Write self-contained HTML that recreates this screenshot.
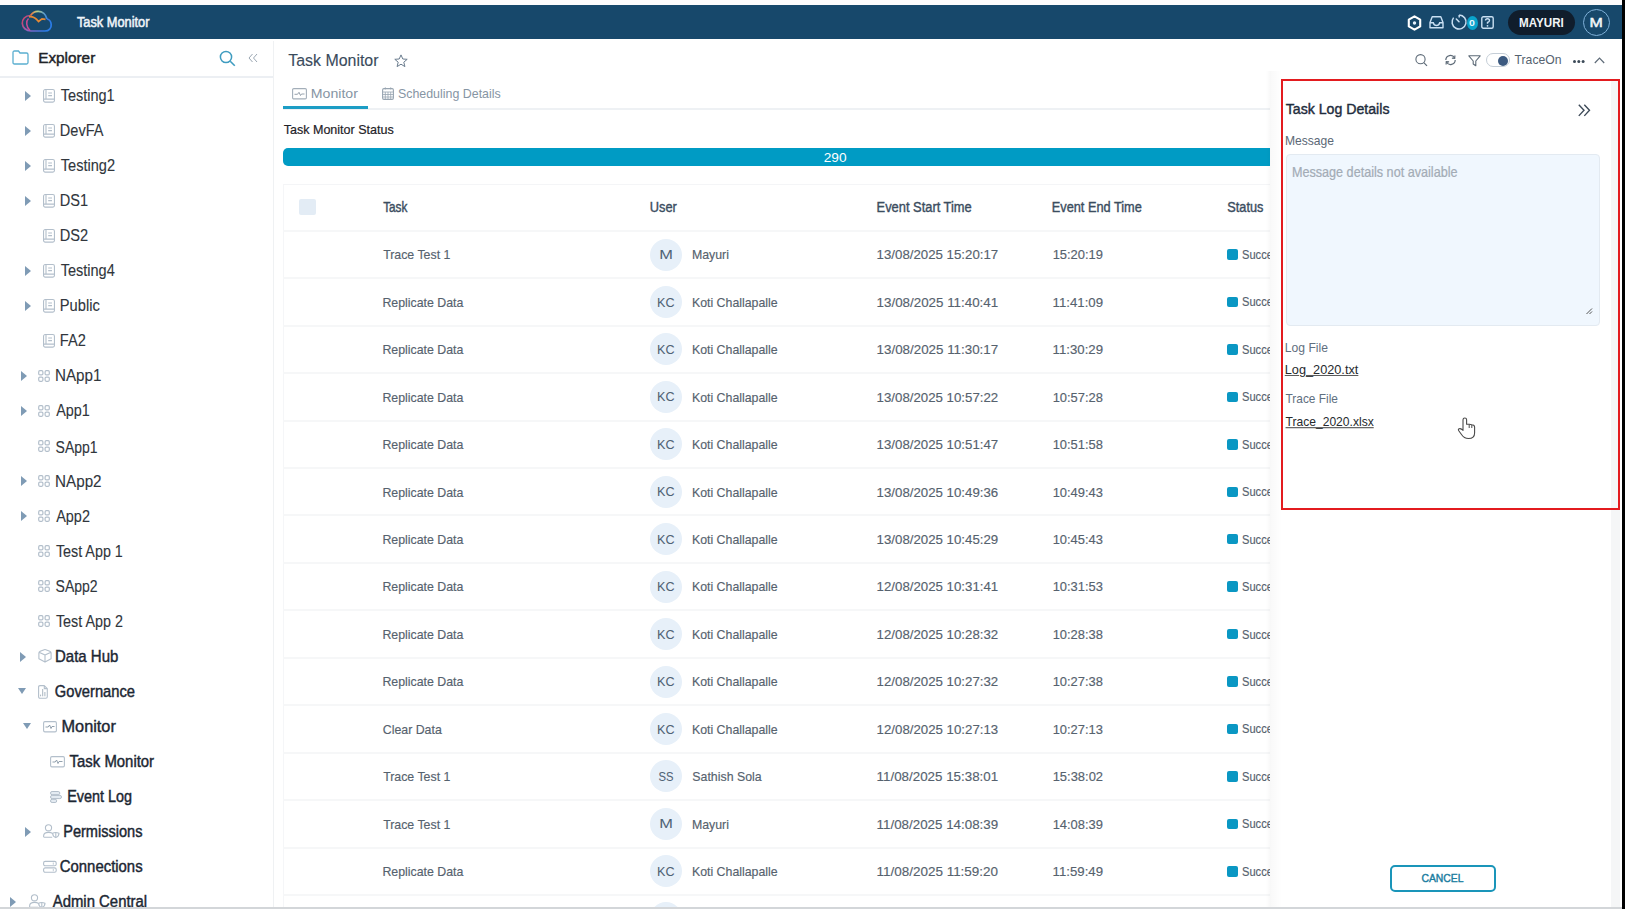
<!DOCTYPE html><html><head><meta charset="utf-8"><style>
*{box-sizing:border-box;margin:0;padding:0}
html,body{width:1625px;height:909px;overflow:hidden;background:#fff;font-family:"Liberation Sans",sans-serif;color:#333}
.abs{position:absolute}
svg{position:absolute;overflow:visible}
.t{position:absolute;white-space:nowrap;line-height:1}
.arr{position:absolute;width:0;height:0;border-top:5px solid transparent;border-bottom:5px solid transparent;border-left:6.5px solid #7f9bb5}
.arrd{position:absolute;width:0;height:0;border-left:4.7px solid transparent;border-right:4.7px solid transparent;border-top:6px solid #7f9bb5}
.av{position:absolute;width:32px;height:32px;border-radius:50%;background:#e7f0f9}
.st{position:absolute;width:10.5px;height:10.5px;background:#0a97c3;border-radius:2px}
.ln{position:absolute;height:2px;background:#f6f7f8}
</style></head><body>
<div class="abs" style="left:0;top:0;width:1625px;height:5px;background:#fdfbfc"></div>
<div class="abs" style="left:0;top:5px;width:1622px;height:34px;background:#17486b"></div>
<svg style="left:20px;top:10px" width="33" height="23" viewBox="0 0 33 23">
<defs><linearGradient id="g1" x1="0" y1="0" x2="1" y2="0.3"><stop offset="0" stop-color="#d9405e"/><stop offset="0.45" stop-color="#8a62c2"/><stop offset="1" stop-color="#2a7be6"/></linearGradient>
<linearGradient id="g2" x1="0" y1="0" x2="1" y2="0"><stop offset="0" stop-color="#e86a3a"/><stop offset="0.4" stop-color="#b7d28a"/><stop offset="1" stop-color="#3a86e0"/></linearGradient></defs>
<path d="M10.5 5.5 C5 5.5 2 9.5 2.3 13.5 C2.6 17.5 6 21 11 21 L25 21 C29 21 31.5 18 31.2 14.5 C31 11.5 29 9.5 27 9" fill="none" stroke="url(#g1)" stroke-width="1.7"/>
<path d="M27 9 C26 4.5 22.5 1.2 18 1.3 C14.5 1.4 12 3 10.5 5.5" fill="none" stroke="url(#g2)" stroke-width="1.7"/>
<path d="M8.5 8.5 C5.8 11 6 17 10 20.5" fill="none" stroke="#c84a95" stroke-width="1.5"/>
<path d="M9 6.8 C13 6.2 16 8.5 18.5 11.5 L22 8.8 L25.5 9.3" fill="none" stroke="#e68a35" stroke-width="1.7"/>
</svg>
<div class="t" style="left:76.94px;top:16.60px;font-size:12.79px;color:#eef3f8;transform:scaleY(1.099);transform-origin:0 10px;-webkit-text-stroke:0.5px #eef3f8;">Task Monitor</div>
<svg style="left:1407px;top:14.5px" width="15" height="16" viewBox="0 0 15 16"><path d="M7.5 1.3 L13.2 4.6 L13.2 11.4 L7.5 14.7 L1.8 11.4 L1.8 4.6 Z" fill="none" stroke="#fff" stroke-width="2.1" stroke-linejoin="round"/><circle cx="7.5" cy="8" r="1.7" fill="#e6f3ff"/></svg>
<svg style="left:1428.5px;top:15.5px" width="15" height="13" viewBox="0 0 15 13"><path d="M3.2 0.8 L11.8 0.8 L14 6.5 L14 11.8 L1 11.8 L1 6.5 Z" fill="none" stroke="#c9dff2" stroke-width="1.4" stroke-linejoin="round"/><path d="M1 6.8 L4.3 6.8 Q5 9.5 7.5 9.5 Q10 9.5 10.7 6.8 L14 6.8" fill="none" stroke="#c9dff2" stroke-width="1.4"/></svg>
<svg style="left:1451px;top:13.5px" width="16" height="16" viewBox="0 0 16 16"><path d="M8.2 1 A7 7 0 1 1 2.6 3.6" fill="none" stroke="#c9dff2" stroke-width="1.5"/><path d="M8.2 0.9 L8.2 3.5" stroke="#c9dff2" stroke-width="1.5"/><path d="M5.3 5 L8 7.8" stroke="#c9dff2" stroke-width="1.5" stroke-linecap="round"/></svg>
<div class="abs" style="left:1466.5px;top:15.8px;width:11px;height:14px;border-radius:50%;background:#0aa3cb"></div>
<div class="t" style="left:1469.08px;top:16.50px;font-size:10.53px;font-weight:bold;color:#e8f8ff;transform:scaleY(0.826);transform-origin:0 9px;">0</div>
<svg style="left:1480.5px;top:15.5px" width="13" height="13" viewBox="0 0 13 13"><rect x="0.8" y="0.8" width="11.4" height="11.4" rx="1.5" fill="none" stroke="#c9dff2" stroke-width="1.4"/><path d="M4.5 4.6 Q4.5 2.7 6.5 2.7 Q8.5 2.7 8.5 4.5 Q8.5 5.8 6.5 6.5 L6.5 7.8" fill="none" stroke="#c9dff2" stroke-width="1.4"/><circle cx="6.5" cy="9.8" r="0.9" fill="#c9dff2"/></svg>
<div class="abs" style="left:1508px;top:10px;width:67px;height:25px;border-radius:12.5px;background:#101d2c"></div>
<div class="t" style="left:1519.05px;top:16.50px;font-size:11.61px;font-weight:bold;color:#f2f5f8;transform:scaleY(1.061);transform-origin:0 10px;">MAYURI</div>
<div class="abs" style="left:1583px;top:9px;width:27px;height:27px;border-radius:50%;border:1.8px solid #7fb0d8"></div>
<div class="t" style="left:1589.52px;top:14.00px;font-size:15.97px;color:#f2f5f8;transform:scaleY(0.817);transform-origin:0 13px;-webkit-text-stroke:0.6px #f2f5f8;">M</div>
<div class="abs" style="left:1622px;top:0;width:3px;height:909px;background:#000"></div>
<div class="abs" style="left:273px;top:41px;width:1px;height:866px;background:#eff1f3"></div>
<div class="abs" style="left:0;top:76px;width:273px;height:1.5px;background:#eceff3"></div>
<svg style="left:12px;top:49.6px" width="17" height="15" viewBox="0 0 17 15"><path d="M1 2.5 Q1 1 2.5 1 L6.5 1 L8 3 L14.5 3 Q16 3 16 4.5 L16 12.5 Q16 14 14.5 14 L2.5 14 Q1 14 1 12.5 Z" fill="none" stroke="#5aaed0" stroke-width="1.3"/></svg>
<div class="t" style="left:38.17px;top:50.00px;font-size:15.34px;color:#1f2328;transform:scaleY(0.935);transform-origin:0 13px;-webkit-text-stroke:0.45px #1f2328;">Explorer</div>
<svg style="left:219px;top:49.5px" width="17" height="17" viewBox="0 0 17 17"><circle cx="7" cy="7" r="5.6" fill="none" stroke="#3f9cc0" stroke-width="1.5"/><path d="M11.2 11.2 L15.8 15.8" stroke="#3f9cc0" stroke-width="1.6"/></svg>
<svg style="left:248px;top:53px" width="10" height="10" viewBox="0 0 10 10"><path d="M4.5 1 L1 5 L4.5 9 M9 1 L5.5 5 L9 9" fill="none" stroke="#9aa6b2" stroke-width="1"/></svg>
<div class="arr" style="left:25px;top:91.00px"></div>
<svg style="left:43px;top:89.2px" width="12" height="14" viewBox="0 0 12 14"><g fill="none" stroke="#b3bfcb" stroke-width="1.1"><rect x="0.55" y="0.55" width="10.9" height="12.6" rx="1.6"/><path d="M3 0.6 L3 10.1 M0.6 10.1 L11.4 10.1 M5.2 4 L9 4 M5.2 6.6 L9 6.6"/></g></svg>
<div class="t" style="left:60.71px;top:89.10px;font-size:14.48px;color:#30363c;transform:scaleY(1.101);transform-origin:0 12px;-webkit-text-stroke:0.1px #30363c;">Testing1</div>
<div class="arr" style="left:25px;top:126.04px"></div>
<svg style="left:43px;top:124.24000000000001px" width="12" height="14" viewBox="0 0 12 14"><g fill="none" stroke="#b3bfcb" stroke-width="1.1"><rect x="0.55" y="0.55" width="10.9" height="12.6" rx="1.6"/><path d="M3 0.6 L3 10.1 M0.6 10.1 L11.4 10.1 M5.2 4 L9 4 M5.2 6.6 L9 6.6"/></g></svg>
<div class="t" style="left:59.84px;top:124.14px;font-size:14.52px;color:#30363c;transform:scaleY(1.098);transform-origin:0 12px;-webkit-text-stroke:0.1px #30363c;">DevFA</div>
<div class="arr" style="left:25px;top:161.08px"></div>
<svg style="left:43px;top:159.28px" width="12" height="14" viewBox="0 0 12 14"><g fill="none" stroke="#b3bfcb" stroke-width="1.1"><rect x="0.55" y="0.55" width="10.9" height="12.6" rx="1.6"/><path d="M3 0.6 L3 10.1 M0.6 10.1 L11.4 10.1 M5.2 4 L9 4 M5.2 6.6 L9 6.6"/></g></svg>
<div class="t" style="left:60.71px;top:159.18px;font-size:14.61px;color:#30363c;transform:scaleY(1.091);transform-origin:0 12px;-webkit-text-stroke:0.1px #30363c;">Testing2</div>
<div class="arr" style="left:25px;top:196.12px"></div>
<svg style="left:43px;top:194.32000000000002px" width="12" height="14" viewBox="0 0 12 14"><g fill="none" stroke="#b3bfcb" stroke-width="1.1"><rect x="0.55" y="0.55" width="10.9" height="12.6" rx="1.6"/><path d="M3 0.6 L3 10.1 M0.6 10.1 L11.4 10.1 M5.2 4 L9 4 M5.2 6.6 L9 6.6"/></g></svg>
<div class="t" style="left:59.84px;top:194.22px;font-size:14.56px;color:#30363c;transform:scaleY(1.095);transform-origin:0 12px;-webkit-text-stroke:0.1px #30363c;">DS1</div>
<svg style="left:43px;top:229.35999999999999px" width="12" height="14" viewBox="0 0 12 14"><g fill="none" stroke="#b3bfcb" stroke-width="1.1"><rect x="0.55" y="0.55" width="10.9" height="12.6" rx="1.6"/><path d="M3 0.6 L3 10.1 M0.6 10.1 L11.4 10.1 M5.2 4 L9 4 M5.2 6.6 L9 6.6"/></g></svg>
<div class="t" style="left:59.83px;top:229.26px;font-size:14.60px;color:#30363c;transform:scaleY(1.092);transform-origin:0 12px;-webkit-text-stroke:0.1px #30363c;">DS2</div>
<div class="arr" style="left:25px;top:266.20px"></div>
<svg style="left:43px;top:264.4px" width="12" height="14" viewBox="0 0 12 14"><g fill="none" stroke="#b3bfcb" stroke-width="1.1"><rect x="0.55" y="0.55" width="10.9" height="12.6" rx="1.6"/><path d="M3 0.6 L3 10.1 M0.6 10.1 L11.4 10.1 M5.2 4 L9 4 M5.2 6.6 L9 6.6"/></g></svg>
<div class="t" style="left:60.71px;top:264.30px;font-size:14.53px;color:#30363c;transform:scaleY(1.097);transform-origin:0 12px;-webkit-text-stroke:0.1px #30363c;">Testing4</div>
<div class="arr" style="left:25px;top:301.24px"></div>
<svg style="left:43px;top:299.44px" width="12" height="14" viewBox="0 0 12 14"><g fill="none" stroke="#b3bfcb" stroke-width="1.1"><rect x="0.55" y="0.55" width="10.9" height="12.6" rx="1.6"/><path d="M3 0.6 L3 10.1 M0.6 10.1 L11.4 10.1 M5.2 4 L9 4 M5.2 6.6 L9 6.6"/></g></svg>
<div class="t" style="left:59.83px;top:299.34px;font-size:14.66px;color:#30363c;transform:scaleY(1.088);transform-origin:0 12px;-webkit-text-stroke:0.1px #30363c;">Public</div>
<svg style="left:43px;top:334.47999999999996px" width="12" height="14" viewBox="0 0 12 14"><g fill="none" stroke="#b3bfcb" stroke-width="1.1"><rect x="0.55" y="0.55" width="10.9" height="12.6" rx="1.6"/><path d="M3 0.6 L3 10.1 M0.6 10.1 L11.4 10.1 M5.2 4 L9 4 M5.2 6.6 L9 6.6"/></g></svg>
<div class="t" style="left:59.83px;top:334.38px;font-size:14.61px;color:#30363c;transform:scaleY(1.091);transform-origin:0 12px;-webkit-text-stroke:0.1px #30363c;">FA2</div>
<div class="arr" style="left:20.5px;top:371.32px"></div>
<svg style="left:37.5px;top:370.12px" width="12" height="12" viewBox="0 0 12 12"><g fill="none" stroke="#b3bfcb" stroke-width="1.2"><rect x="0.7" y="0.7" width="4.2" height="4.2" rx="1.2"/><rect x="7.1" y="0.7" width="4.2" height="4.2" rx="1.2"/><rect x="0.7" y="7.1" width="4.2" height="4.2" rx="1.2"/><rect x="7.1" y="7.1" width="4.2" height="4.2" rx="1.2"/></g></svg>
<div class="t" style="left:54.98px;top:368.42px;font-size:15.22px;color:#30363c;transform:scaleY(1.047);transform-origin:0 13px;-webkit-text-stroke:0.1px #30363c;">NApp1</div>
<div class="arr" style="left:20.5px;top:406.36px"></div>
<svg style="left:37.5px;top:405.16px" width="12" height="12" viewBox="0 0 12 12"><g fill="none" stroke="#b3bfcb" stroke-width="1.2"><rect x="0.7" y="0.7" width="4.2" height="4.2" rx="1.2"/><rect x="7.1" y="0.7" width="4.2" height="4.2" rx="1.2"/><rect x="0.7" y="7.1" width="4.2" height="4.2" rx="1.2"/><rect x="7.1" y="7.1" width="4.2" height="4.2" rx="1.2"/></g></svg>
<div class="t" style="left:56.20px;top:404.46px;font-size:14.41px;color:#30363c;transform:scaleY(1.106);transform-origin:0 12px;-webkit-text-stroke:0.1px #30363c;">App1</div>
<svg style="left:37.5px;top:440.2px" width="12" height="12" viewBox="0 0 12 12"><g fill="none" stroke="#b3bfcb" stroke-width="1.2"><rect x="0.7" y="0.7" width="4.2" height="4.2" rx="1.2"/><rect x="7.1" y="0.7" width="4.2" height="4.2" rx="1.2"/><rect x="0.7" y="7.1" width="4.2" height="4.2" rx="1.2"/><rect x="7.1" y="7.1" width="4.2" height="4.2" rx="1.2"/></g></svg>
<div class="t" style="left:55.57px;top:440.50px;font-size:13.99px;color:#30363c;transform:scaleY(1.140);transform-origin:0 11px;-webkit-text-stroke:0.1px #30363c;">SApp1</div>
<div class="arr" style="left:20.5px;top:476.44px"></div>
<svg style="left:37.5px;top:475.24px" width="12" height="12" viewBox="0 0 12 12"><g fill="none" stroke="#b3bfcb" stroke-width="1.2"><rect x="0.7" y="0.7" width="4.2" height="4.2" rx="1.2"/><rect x="7.1" y="0.7" width="4.2" height="4.2" rx="1.2"/><rect x="0.7" y="7.1" width="4.2" height="4.2" rx="1.2"/><rect x="7.1" y="7.1" width="4.2" height="4.2" rx="1.2"/></g></svg>
<div class="t" style="left:54.98px;top:473.54px;font-size:15.25px;color:#30363c;transform:scaleY(1.046);transform-origin:0 13px;-webkit-text-stroke:0.1px #30363c;">NApp2</div>
<div class="arr" style="left:20.5px;top:511.48px"></div>
<svg style="left:37.5px;top:510.28px" width="12" height="12" viewBox="0 0 12 12"><g fill="none" stroke="#b3bfcb" stroke-width="1.2"><rect x="0.7" y="0.7" width="4.2" height="4.2" rx="1.2"/><rect x="7.1" y="0.7" width="4.2" height="4.2" rx="1.2"/><rect x="0.7" y="7.1" width="4.2" height="4.2" rx="1.2"/><rect x="7.1" y="7.1" width="4.2" height="4.2" rx="1.2"/></g></svg>
<div class="t" style="left:56.20px;top:509.58px;font-size:14.44px;color:#30363c;transform:scaleY(1.104);transform-origin:0 12px;-webkit-text-stroke:0.1px #30363c;">App2</div>
<svg style="left:37.5px;top:545.3199999999999px" width="12" height="12" viewBox="0 0 12 12"><g fill="none" stroke="#b3bfcb" stroke-width="1.2"><rect x="0.7" y="0.7" width="4.2" height="4.2" rx="1.2"/><rect x="7.1" y="0.7" width="4.2" height="4.2" rx="1.2"/><rect x="0.7" y="7.1" width="4.2" height="4.2" rx="1.2"/><rect x="7.1" y="7.1" width="4.2" height="4.2" rx="1.2"/></g></svg>
<div class="t" style="left:55.91px;top:544.62px;font-size:14.33px;color:#30363c;transform:scaleY(1.112);transform-origin:0 12px;-webkit-text-stroke:0.1px #30363c;">Test App 1</div>
<svg style="left:37.5px;top:580.36px" width="12" height="12" viewBox="0 0 12 12"><g fill="none" stroke="#b3bfcb" stroke-width="1.2"><rect x="0.7" y="0.7" width="4.2" height="4.2" rx="1.2"/><rect x="7.1" y="0.7" width="4.2" height="4.2" rx="1.2"/><rect x="0.7" y="7.1" width="4.2" height="4.2" rx="1.2"/><rect x="7.1" y="7.1" width="4.2" height="4.2" rx="1.2"/></g></svg>
<div class="t" style="left:55.57px;top:579.66px;font-size:14.01px;color:#30363c;transform:scaleY(1.138);transform-origin:0 12px;-webkit-text-stroke:0.1px #30363c;">SApp2</div>
<svg style="left:37.5px;top:615.4px" width="12" height="12" viewBox="0 0 12 12"><g fill="none" stroke="#b3bfcb" stroke-width="1.2"><rect x="0.7" y="0.7" width="4.2" height="4.2" rx="1.2"/><rect x="7.1" y="0.7" width="4.2" height="4.2" rx="1.2"/><rect x="0.7" y="7.1" width="4.2" height="4.2" rx="1.2"/><rect x="7.1" y="7.1" width="4.2" height="4.2" rx="1.2"/></g></svg>
<div class="t" style="left:55.91px;top:614.70px;font-size:14.35px;color:#30363c;transform:scaleY(1.111);transform-origin:0 12px;-webkit-text-stroke:0.1px #30363c;">Test App 2</div>
<div class="arr" style="left:20px;top:651.64px"></div>
<svg style="left:38px;top:649.04px" width="14" height="14" viewBox="0 0 14 14"><path d="M0.9 4 Q0.9 3 2.2 2.3 L6.2 0.7 Q7 0.4 7.8 0.7 L11.8 2.3 Q13.1 3 13.1 4 L13.1 9.8 L7 13.1 L0.9 9.8 Z M1 3.2 L7 6 L13 3.2 M7 6 L7 13.1" fill="none" stroke="#b3bfcb" stroke-width="1.1" stroke-linejoin="round"/></svg>
<div class="t" style="left:55.00px;top:648.74px;font-size:15.01px;color:#1c2733;transform:scaleY(1.062);transform-origin:0 13px;-webkit-text-stroke:0.4px #1c2733;">Data Hub</div>
<div class="arrd" style="left:18.2px;top:688.38px"></div>
<svg style="left:38px;top:684.78px" width="10" height="14" viewBox="0 0 10 14"><path d="M2 0.6 L6.3 0.6 L9.3 3.6 L9.3 11.8 Q9.3 13.3 7.8 13.3 L2 13.3 Q0.6 13.3 0.6 11.8 L0.6 2 Q0.6 0.6 2 0.6 Z M6.3 0.6 L6.3 3.6 L9.3 3.6" fill="none" stroke="#b3bfcb" stroke-width="1.1" stroke-linejoin="round"/><path d="M2.6 11.3 L2.6 9.6 M4.7 11.3 L4.7 4 M6.9 11.3 L6.9 7" stroke="#a9b5c1" stroke-width="1"/></svg>
<div class="t" style="left:54.86px;top:684.78px;font-size:14.71px;color:#1c2733;transform:scaleY(1.084);transform-origin:0 12px;-webkit-text-stroke:0.4px #1c2733;">Governance</div>
<div class="arrd" style="left:23.2px;top:723.42px"></div>
<svg style="left:43px;top:720.72px" width="14" height="11.5" viewBox="0 0 14 11.5"><rect x="0.6" y="0.6" width="12.8" height="10.3" rx="1.3" fill="none" stroke="#b3bfcb" stroke-width="1.1"/><path d="M2.5 6 L5.2 6 L6.6 4 L8 7.5 L9 5.5 L11.5 5.5" fill="none" stroke="#8796a5" stroke-width="0.9"/></svg>
<div class="t" style="left:61.49px;top:717.82px;font-size:16.32px;color:#1c2733;transform:scaleY(0.977);transform-origin:0 14px;-webkit-text-stroke:0.4px #1c2733;">Monitor</div>
<svg style="left:49.6px;top:755.76px" width="15" height="11.5" viewBox="0 0 15 11.5"><rect x="0.6" y="0.6" width="13.8" height="10.3" rx="1.3" fill="none" stroke="#b3bfcb" stroke-width="1.1"/><path d="M2.5 6 L5.2 6 L6.6 4 L8 7.5 L9 5.5 L12.5 5.5" fill="none" stroke="#8796a5" stroke-width="0.9"/></svg>
<div class="t" style="left:69.60px;top:754.86px;font-size:14.92px;color:#1c2733;transform:scaleY(1.068);transform-origin:0 12px;-webkit-text-stroke:0.4px #1c2733;">Task Monitor</div>
<svg style="left:49.6px;top:791.10px" width="12" height="12" viewBox="0 0 12 12"><g fill="#e4ebf2" stroke="#b3bfcb" stroke-width="1"><rect x="0.5" y="0.5" width="9.3" height="3.2" rx="1.6"/><rect x="0.5" y="4.4" width="11" height="3.2" rx="1.6"/><rect x="0.5" y="8.3" width="6.2" height="3.2" rx="1.6"/></g></svg>
<div class="t" style="left:67.15px;top:789.90px;font-size:14.40px;color:#1c2733;transform:scaleY(1.107);transform-origin:0 12px;-webkit-text-stroke:0.4px #1c2733;">Event Log</div>
<div class="arr" style="left:25.4px;top:826.84px"></div>
<svg style="left:43px;top:824.14px" width="17" height="14" viewBox="0 0 17 14"><g fill="none" stroke="#b3bfcb" stroke-width="1.1"><circle cx="5.5" cy="3.8" r="3.1"/><path d="M9.3 9.3 Q8.3 8.4 5.5 8.4 Q0.6 8.4 0.6 12 L0.6 12.6 Q0.6 13.2 1.2 13.2 L9.2 13.2"/><path d="M9.6 9.3 Q12.6 7.8 16 9.3 Q16 12.3 12.8 13.6 Q9.6 12.3 9.6 9.3 Z"/><path d="M12.8 9 L12.8 13.2"/></g></svg>
<div class="t" style="left:63.24px;top:824.94px;font-size:14.56px;color:#1c2733;transform:scaleY(1.095);transform-origin:0 12px;-webkit-text-stroke:0.4px #1c2733;">Permissions</div>
<svg style="left:42.8px;top:861.18px" width="14" height="12" viewBox="0 0 14 12"><g fill="none" stroke="#b3bfcb" stroke-width="1.1"><rect x="0.6" y="0.4" width="12.6" height="4.4" rx="1.6"/><rect x="0.6" y="6.9" width="12.6" height="4.4" rx="1.6"/></g><path d="M10.3 1.5 L10.3 3.7 M10.3 8 L10.3 10.2" stroke="#b3bfcb" stroke-width="0.8"/></svg>
<div class="t" style="left:59.75px;top:859.98px;font-size:14.92px;color:#1c2733;transform:scaleY(1.068);transform-origin:0 12px;-webkit-text-stroke:0.4px #1c2733;">Connections</div>
<div class="arr" style="left:10.3px;top:896.92px"></div>
<svg style="left:28.5px;top:894.2199999999999px" width="17" height="14" viewBox="0 0 17 14"><g fill="none" stroke="#b3bfcb" stroke-width="1.1"><circle cx="5.5" cy="3.8" r="3.1"/><path d="M9.3 9.3 Q8.3 8.4 5.5 8.4 Q0.6 8.4 0.6 12 L0.6 12.6 Q0.6 13.2 1.2 13.2 L9.2 13.2"/><path d="M9.6 9.3 Q12.6 7.8 16 9.3 Q16 12.3 12.8 13.6 Q9.6 12.3 9.6 9.3 Z"/><path d="M12.8 9 L12.8 13.2"/></g></svg>
<div class="t" style="left:52.70px;top:895.02px;font-size:14.91px;color:#1c2733;transform:scaleY(1.069);transform-origin:0 12px;-webkit-text-stroke:0.4px #1c2733;">Admin Central</div>
<div class="t" style="left:288.28px;top:52.70px;font-size:15.93px;color:#3a4b5c;transform:scaleY(0.982);transform-origin:0 13px;-webkit-text-stroke:0.12px #3a4b5c;">Task Monitor</div>
<svg style="left:394px;top:53.5px" width="14" height="14" viewBox="0 0 14 14"><path d="M7 0.9 L8.8 5 L13.2 5.3 L9.8 8.2 L10.9 12.6 L7 10.2 L3.1 12.6 L4.2 8.2 L0.8 5.3 L5.2 5 Z" fill="none" stroke="#6a7c8e" stroke-width="1" stroke-linejoin="round"/></svg>
<svg style="left:291.6px;top:88px" width="15" height="11.5" viewBox="0 0 15 11.5"><rect x="0.6" y="0.6" width="13.8" height="10.3" rx="1.2" fill="none" stroke="#a3aeb9" stroke-width="1.1"/><path d="M2.5 6.3 L5.5 6.3 L7 4.3 L8.5 7.5 L9.5 6 L12.5 6" fill="none" stroke="#8d99a5" stroke-width="0.9"/></svg>
<div class="t" style="left:310.77px;top:86.40px;font-size:14.13px;color:#8695a4;transform:scaleY(0.964);transform-origin:0 12px;">Monitor</div>
<svg style="left:382.2px;top:87.2px" width="12" height="13" viewBox="0 0 12 13"><rect x="0.6" y="1.6" width="10.8" height="10.8" rx="1.3" fill="none" stroke="#98a5b1" stroke-width="1.1"/><path d="M0.6 5 L11.4 5 M0.6 7.5 L11.4 7.5 M0.6 10 L11.4 10 M3.3 5 L3.3 12.4 M6 5 L6 12.4 M8.7 5 L8.7 12.4 M3.3 0.3 L3.3 2.5 M8.7 0.3 L8.7 2.5" stroke="#98a5b1" stroke-width="0.8"/></svg>
<div class="t" style="left:397.94px;top:88.40px;font-size:12.41px;color:#8695a4;transform:scaleY(1.098);transform-origin:0 10px;">Scheduling Details</div>
<div class="abs" style="left:283px;top:108px;width:987px;height:1.5px;background:#eef1f4"></div>
<div class="abs" style="left:283px;top:105.8px;width:84.5px;height:2.8px;background:#1c9dc5"></div>
<div class="t" style="left:283.65px;top:123.50px;font-size:12.55px;color:#1f2328;transform:scaleY(1.039);transform-origin:0 10px;-webkit-text-stroke:0.2px #1f2328;">Task Monitor Status</div>
<div class="abs" style="left:283px;top:148px;width:988px;height:18px;background:#009bc4;border-radius:5px 0 0 5px"></div>
<div class="t" style="left:823.72px;top:151.00px;font-size:13.67px;color:#ffffff;transform:scaleY(0.944);transform-origin:0 11px;">290</div>
<div class="abs" style="left:283px;top:183.5px;width:987px;height:724px;background:#fff;border-top:1px solid #f4f5f7;border-left:1px solid #f5f6f8"></div>
<div class="abs" style="left:298.5px;top:199px;width:17px;height:16px;border-radius:2px;background:#e3ecf5"></div>
<div class="t" style="left:383.16px;top:202.00px;font-size:11.79px;color:#3b4d60;transform:scaleY(1.180);transform-origin:0 10px;-webkit-text-stroke:0.35px #3b4d60;">Task</div>
<div class="t" style="left:649.74px;top:202.00px;font-size:12.82px;color:#3b4d60;transform:scaleY(1.085);transform-origin:0 10px;-webkit-text-stroke:0.35px #3b4d60;">User</div>
<div class="t" style="left:876.57px;top:202.00px;font-size:12.88px;color:#3b4d60;transform:scaleY(1.080);transform-origin:0 10px;-webkit-text-stroke:0.35px #3b4d60;">Event Start Time</div>
<div class="t" style="left:1051.78px;top:202.00px;font-size:12.76px;color:#3b4d60;transform:scaleY(1.090);transform-origin:0 10px;-webkit-text-stroke:0.35px #3b4d60;">Event End Time</div>
<div class="t" style="left:1227.33px;top:202.00px;font-size:12.74px;color:#3b4d60;transform:scaleY(1.092);transform-origin:0 10px;-webkit-text-stroke:0.35px #3b4d60;">Status</div>
<div class="ln" style="left:283px;top:229.8px;width:987px"></div>
<div class="t" style="left:383.15px;top:249.30px;font-size:12.35px;color:#56626e;transform:scaleY(1.103);transform-origin:0 10px;-webkit-text-stroke:0.15px #56626e;">Trace Test 1</div>
<div class="av" style="left:650px;top:238.5px"></div>
<div class="t" style="left:659.19px;top:245.10px;font-size:16.42px;color:#4f6275;transform:scaleY(0.786);transform-origin:0 14px;-webkit-text-stroke:0.05px #4f6275;">M</div>
<div class="t" style="left:691.91px;top:249.30px;font-size:12.35px;color:#56626e;transform:scaleY(1.103);transform-origin:0 10px;-webkit-text-stroke:0.15px #56626e;">Mayuri</div>
<div class="t" style="left:876.61px;top:248.30px;font-size:13.26px;color:#56626e;transform:scaleY(1.027);transform-origin:0 11px;-webkit-text-stroke:0.15px #56626e;">13/08/2025 15:20:17</div>
<div class="t" style="left:1052.63px;top:249.30px;font-size:12.94px;color:#56626e;transform:scaleY(1.052);transform-origin:0 10px;-webkit-text-stroke:0.15px #56626e;">15:20:19</div>
<div class="st" style="left:1227.3px;top:249.3px"></div>
<div class="abs" style="left:1240px;top:242.5px;width:30.5px;height:22px;overflow:hidden"><div class="t" style="left:2.24px;top:6.60px;font-size:12.35px;color:#56626e;transform:scale(0.900,1.080);transform-origin:0 10px;-webkit-text-stroke:0.15px #56626e;">Success</div></div>
<div class="ln" style="left:283px;top:277.2px;width:987px"></div>
<div class="t" style="left:382.41px;top:296.74px;font-size:12.35px;color:#56626e;transform:scaleY(1.103);transform-origin:0 10px;-webkit-text-stroke:0.15px #56626e;">Replicate Data</div>
<div class="av" style="left:650px;top:285.9px"></div>
<div class="t" style="left:656.99px;top:296.54px;font-size:12.60px;color:#4f6275;transform:scaleY(1.024);transform-origin:0 10px;-webkit-text-stroke:0.05px #4f6275;">KC</div>
<div class="t" style="left:691.91px;top:296.74px;font-size:12.35px;color:#56626e;transform:scaleY(1.103);transform-origin:0 10px;-webkit-text-stroke:0.15px #56626e;">Koti Challapalle</div>
<div class="t" style="left:876.60px;top:295.74px;font-size:13.36px;color:#56626e;transform:scaleY(1.019);transform-origin:0 11px;-webkit-text-stroke:0.15px #56626e;">13/08/2025 11:40:41</div>
<div class="t" style="left:1052.61px;top:295.74px;font-size:13.21px;color:#56626e;transform:scaleY(1.032);transform-origin:0 11px;-webkit-text-stroke:0.15px #56626e;">11:41:09</div>
<div class="st" style="left:1227.3px;top:296.7px"></div>
<div class="abs" style="left:1240px;top:289.9px;width:30.5px;height:22px;overflow:hidden"><div class="t" style="left:2.24px;top:6.60px;font-size:12.35px;color:#56626e;transform:scale(0.900,1.080);transform-origin:0 10px;-webkit-text-stroke:0.15px #56626e;">Success</div></div>
<div class="ln" style="left:283px;top:324.7px;width:987px"></div>
<div class="t" style="left:382.41px;top:344.18px;font-size:12.35px;color:#56626e;transform:scaleY(1.103);transform-origin:0 10px;-webkit-text-stroke:0.15px #56626e;">Replicate Data</div>
<div class="av" style="left:650px;top:333.4px"></div>
<div class="t" style="left:656.99px;top:343.98px;font-size:12.60px;color:#4f6275;transform:scaleY(1.024);transform-origin:0 10px;-webkit-text-stroke:0.05px #4f6275;">KC</div>
<div class="t" style="left:691.91px;top:344.18px;font-size:12.35px;color:#56626e;transform:scaleY(1.103);transform-origin:0 10px;-webkit-text-stroke:0.15px #56626e;">Koti Challapalle</div>
<div class="t" style="left:876.60px;top:343.18px;font-size:13.37px;color:#56626e;transform:scaleY(1.019);transform-origin:0 11px;-webkit-text-stroke:0.15px #56626e;">13/08/2025 11:30:17</div>
<div class="t" style="left:1052.61px;top:343.18px;font-size:13.21px;color:#56626e;transform:scaleY(1.032);transform-origin:0 11px;-webkit-text-stroke:0.15px #56626e;">11:30:29</div>
<div class="st" style="left:1227.3px;top:344.2px"></div>
<div class="abs" style="left:1240px;top:337.4px;width:30.5px;height:22px;overflow:hidden"><div class="t" style="left:2.24px;top:6.60px;font-size:12.35px;color:#56626e;transform:scale(0.900,1.080);transform-origin:0 10px;-webkit-text-stroke:0.15px #56626e;">Success</div></div>
<div class="ln" style="left:283px;top:372.1px;width:987px"></div>
<div class="t" style="left:382.41px;top:391.62px;font-size:12.35px;color:#56626e;transform:scaleY(1.103);transform-origin:0 10px;-webkit-text-stroke:0.15px #56626e;">Replicate Data</div>
<div class="av" style="left:650px;top:380.8px"></div>
<div class="t" style="left:656.99px;top:391.42px;font-size:12.60px;color:#4f6275;transform:scaleY(1.024);transform-origin:0 10px;-webkit-text-stroke:0.05px #4f6275;">KC</div>
<div class="t" style="left:691.91px;top:391.62px;font-size:12.35px;color:#56626e;transform:scaleY(1.103);transform-origin:0 10px;-webkit-text-stroke:0.15px #56626e;">Koti Challapalle</div>
<div class="t" style="left:876.61px;top:390.62px;font-size:13.26px;color:#56626e;transform:scaleY(1.027);transform-origin:0 11px;-webkit-text-stroke:0.15px #56626e;">13/08/2025 10:57:22</div>
<div class="t" style="left:1052.63px;top:391.62px;font-size:12.93px;color:#56626e;transform:scaleY(1.054);transform-origin:0 10px;-webkit-text-stroke:0.15px #56626e;">10:57:28</div>
<div class="st" style="left:1227.3px;top:391.6px"></div>
<div class="abs" style="left:1240px;top:384.8px;width:30.5px;height:22px;overflow:hidden"><div class="t" style="left:2.24px;top:6.60px;font-size:12.35px;color:#56626e;transform:scale(0.900,1.080);transform-origin:0 10px;-webkit-text-stroke:0.15px #56626e;">Success</div></div>
<div class="ln" style="left:283px;top:419.6px;width:987px"></div>
<div class="t" style="left:382.41px;top:439.06px;font-size:12.35px;color:#56626e;transform:scaleY(1.103);transform-origin:0 10px;-webkit-text-stroke:0.15px #56626e;">Replicate Data</div>
<div class="av" style="left:650px;top:428.3px"></div>
<div class="t" style="left:656.99px;top:438.86px;font-size:12.60px;color:#4f6275;transform:scaleY(1.024);transform-origin:0 10px;-webkit-text-stroke:0.05px #4f6275;">KC</div>
<div class="t" style="left:691.91px;top:439.06px;font-size:12.35px;color:#56626e;transform:scaleY(1.103);transform-origin:0 10px;-webkit-text-stroke:0.15px #56626e;">Koti Challapalle</div>
<div class="t" style="left:876.61px;top:438.06px;font-size:13.26px;color:#56626e;transform:scaleY(1.027);transform-origin:0 11px;-webkit-text-stroke:0.15px #56626e;">13/08/2025 10:51:47</div>
<div class="t" style="left:1052.63px;top:439.06px;font-size:12.93px;color:#56626e;transform:scaleY(1.054);transform-origin:0 10px;-webkit-text-stroke:0.15px #56626e;">10:51:58</div>
<div class="st" style="left:1227.3px;top:439.1px"></div>
<div class="abs" style="left:1240px;top:432.3px;width:30.5px;height:22px;overflow:hidden"><div class="t" style="left:2.24px;top:6.60px;font-size:12.35px;color:#56626e;transform:scale(0.900,1.080);transform-origin:0 10px;-webkit-text-stroke:0.15px #56626e;">Success</div></div>
<div class="ln" style="left:283px;top:467.0px;width:987px"></div>
<div class="t" style="left:382.41px;top:486.50px;font-size:12.35px;color:#56626e;transform:scaleY(1.103);transform-origin:0 10px;-webkit-text-stroke:0.15px #56626e;">Replicate Data</div>
<div class="av" style="left:650px;top:475.7px"></div>
<div class="t" style="left:656.99px;top:486.30px;font-size:12.60px;color:#4f6275;transform:scaleY(1.024);transform-origin:0 10px;-webkit-text-stroke:0.05px #4f6275;">KC</div>
<div class="t" style="left:691.91px;top:486.50px;font-size:12.35px;color:#56626e;transform:scaleY(1.103);transform-origin:0 10px;-webkit-text-stroke:0.15px #56626e;">Koti Challapalle</div>
<div class="t" style="left:876.61px;top:485.50px;font-size:13.25px;color:#56626e;transform:scaleY(1.029);transform-origin:0 11px;-webkit-text-stroke:0.15px #56626e;">13/08/2025 10:49:36</div>
<div class="t" style="left:1052.63px;top:486.50px;font-size:12.93px;color:#56626e;transform:scaleY(1.054);transform-origin:0 10px;-webkit-text-stroke:0.15px #56626e;">10:49:43</div>
<div class="st" style="left:1227.3px;top:486.5px"></div>
<div class="abs" style="left:1240px;top:479.7px;width:30.5px;height:22px;overflow:hidden"><div class="t" style="left:2.24px;top:6.60px;font-size:12.35px;color:#56626e;transform:scale(0.900,1.080);transform-origin:0 10px;-webkit-text-stroke:0.15px #56626e;">Success</div></div>
<div class="ln" style="left:283px;top:514.4px;width:987px"></div>
<div class="t" style="left:382.41px;top:533.94px;font-size:12.35px;color:#56626e;transform:scaleY(1.103);transform-origin:0 10px;-webkit-text-stroke:0.15px #56626e;">Replicate Data</div>
<div class="av" style="left:650px;top:523.1px"></div>
<div class="t" style="left:656.99px;top:533.74px;font-size:12.60px;color:#4f6275;transform:scaleY(1.024);transform-origin:0 10px;-webkit-text-stroke:0.05px #4f6275;">KC</div>
<div class="t" style="left:691.91px;top:533.94px;font-size:12.35px;color:#56626e;transform:scaleY(1.103);transform-origin:0 10px;-webkit-text-stroke:0.15px #56626e;">Koti Challapalle</div>
<div class="t" style="left:876.61px;top:532.94px;font-size:13.25px;color:#56626e;transform:scaleY(1.028);transform-origin:0 11px;-webkit-text-stroke:0.15px #56626e;">13/08/2025 10:45:29</div>
<div class="t" style="left:1052.63px;top:533.94px;font-size:12.93px;color:#56626e;transform:scaleY(1.054);transform-origin:0 10px;-webkit-text-stroke:0.15px #56626e;">10:45:43</div>
<div class="st" style="left:1227.3px;top:533.9px"></div>
<div class="abs" style="left:1240px;top:527.1px;width:30.5px;height:22px;overflow:hidden"><div class="t" style="left:2.24px;top:6.60px;font-size:12.35px;color:#56626e;transform:scale(0.900,1.080);transform-origin:0 10px;-webkit-text-stroke:0.15px #56626e;">Success</div></div>
<div class="ln" style="left:283px;top:561.9px;width:987px"></div>
<div class="t" style="left:382.41px;top:581.38px;font-size:12.35px;color:#56626e;transform:scaleY(1.103);transform-origin:0 10px;-webkit-text-stroke:0.15px #56626e;">Replicate Data</div>
<div class="av" style="left:650px;top:570.6px"></div>
<div class="t" style="left:656.99px;top:581.18px;font-size:12.60px;color:#4f6275;transform:scaleY(1.024);transform-origin:0 10px;-webkit-text-stroke:0.05px #4f6275;">KC</div>
<div class="t" style="left:691.91px;top:581.38px;font-size:12.35px;color:#56626e;transform:scaleY(1.103);transform-origin:0 10px;-webkit-text-stroke:0.15px #56626e;">Koti Challapalle</div>
<div class="t" style="left:876.61px;top:580.38px;font-size:13.25px;color:#56626e;transform:scaleY(1.028);transform-origin:0 11px;-webkit-text-stroke:0.15px #56626e;">12/08/2025 10:31:41</div>
<div class="t" style="left:1052.63px;top:581.38px;font-size:12.93px;color:#56626e;transform:scaleY(1.054);transform-origin:0 10px;-webkit-text-stroke:0.15px #56626e;">10:31:53</div>
<div class="st" style="left:1227.3px;top:581.4px"></div>
<div class="abs" style="left:1240px;top:574.6px;width:30.5px;height:22px;overflow:hidden"><div class="t" style="left:2.24px;top:6.60px;font-size:12.35px;color:#56626e;transform:scale(0.900,1.080);transform-origin:0 10px;-webkit-text-stroke:0.15px #56626e;">Success</div></div>
<div class="ln" style="left:283px;top:609.3px;width:987px"></div>
<div class="t" style="left:382.41px;top:628.82px;font-size:12.35px;color:#56626e;transform:scaleY(1.103);transform-origin:0 10px;-webkit-text-stroke:0.15px #56626e;">Replicate Data</div>
<div class="av" style="left:650px;top:618.0px"></div>
<div class="t" style="left:656.99px;top:628.62px;font-size:12.60px;color:#4f6275;transform:scaleY(1.024);transform-origin:0 10px;-webkit-text-stroke:0.05px #4f6275;">KC</div>
<div class="t" style="left:691.91px;top:628.82px;font-size:12.35px;color:#56626e;transform:scaleY(1.103);transform-origin:0 10px;-webkit-text-stroke:0.15px #56626e;">Koti Challapalle</div>
<div class="t" style="left:876.61px;top:627.82px;font-size:13.26px;color:#56626e;transform:scaleY(1.027);transform-origin:0 11px;-webkit-text-stroke:0.15px #56626e;">12/08/2025 10:28:32</div>
<div class="t" style="left:1052.63px;top:628.82px;font-size:12.93px;color:#56626e;transform:scaleY(1.054);transform-origin:0 10px;-webkit-text-stroke:0.15px #56626e;">10:28:38</div>
<div class="st" style="left:1227.3px;top:628.8px"></div>
<div class="abs" style="left:1240px;top:622.0px;width:30.5px;height:22px;overflow:hidden"><div class="t" style="left:2.24px;top:6.60px;font-size:12.35px;color:#56626e;transform:scale(0.900,1.080);transform-origin:0 10px;-webkit-text-stroke:0.15px #56626e;">Success</div></div>
<div class="ln" style="left:283px;top:656.8px;width:987px"></div>
<div class="t" style="left:382.41px;top:676.26px;font-size:12.35px;color:#56626e;transform:scaleY(1.103);transform-origin:0 10px;-webkit-text-stroke:0.15px #56626e;">Replicate Data</div>
<div class="av" style="left:650px;top:665.5px"></div>
<div class="t" style="left:656.99px;top:676.06px;font-size:12.60px;color:#4f6275;transform:scaleY(1.024);transform-origin:0 10px;-webkit-text-stroke:0.05px #4f6275;">KC</div>
<div class="t" style="left:691.91px;top:676.26px;font-size:12.35px;color:#56626e;transform:scaleY(1.103);transform-origin:0 10px;-webkit-text-stroke:0.15px #56626e;">Koti Challapalle</div>
<div class="t" style="left:876.61px;top:675.26px;font-size:13.26px;color:#56626e;transform:scaleY(1.027);transform-origin:0 11px;-webkit-text-stroke:0.15px #56626e;">12/08/2025 10:27:32</div>
<div class="t" style="left:1052.63px;top:676.26px;font-size:12.93px;color:#56626e;transform:scaleY(1.054);transform-origin:0 10px;-webkit-text-stroke:0.15px #56626e;">10:27:38</div>
<div class="st" style="left:1227.3px;top:676.3px"></div>
<div class="abs" style="left:1240px;top:669.5px;width:30.5px;height:22px;overflow:hidden"><div class="t" style="left:2.24px;top:6.60px;font-size:12.35px;color:#56626e;transform:scale(0.900,1.080);transform-origin:0 10px;-webkit-text-stroke:0.15px #56626e;">Success</div></div>
<div class="ln" style="left:283px;top:704.2px;width:987px"></div>
<div class="t" style="left:382.78px;top:723.70px;font-size:12.35px;color:#56626e;transform:scaleY(1.103);transform-origin:0 10px;-webkit-text-stroke:0.15px #56626e;">Clear Data</div>
<div class="av" style="left:650px;top:712.9px"></div>
<div class="t" style="left:656.99px;top:723.50px;font-size:12.60px;color:#4f6275;transform:scaleY(1.024);transform-origin:0 10px;-webkit-text-stroke:0.05px #4f6275;">KC</div>
<div class="t" style="left:691.91px;top:723.70px;font-size:12.35px;color:#56626e;transform:scaleY(1.103);transform-origin:0 10px;-webkit-text-stroke:0.15px #56626e;">Koti Challapalle</div>
<div class="t" style="left:876.61px;top:722.70px;font-size:13.25px;color:#56626e;transform:scaleY(1.029);transform-origin:0 11px;-webkit-text-stroke:0.15px #56626e;">12/08/2025 10:27:13</div>
<div class="t" style="left:1052.63px;top:723.70px;font-size:12.93px;color:#56626e;transform:scaleY(1.054);transform-origin:0 10px;-webkit-text-stroke:0.15px #56626e;">10:27:13</div>
<div class="st" style="left:1227.3px;top:723.7px"></div>
<div class="abs" style="left:1240px;top:716.9px;width:30.5px;height:22px;overflow:hidden"><div class="t" style="left:2.24px;top:6.60px;font-size:12.35px;color:#56626e;transform:scale(0.900,1.080);transform-origin:0 10px;-webkit-text-stroke:0.15px #56626e;">Success</div></div>
<div class="ln" style="left:283px;top:751.6px;width:987px"></div>
<div class="t" style="left:383.15px;top:771.14px;font-size:12.35px;color:#56626e;transform:scaleY(1.103);transform-origin:0 10px;-webkit-text-stroke:0.15px #56626e;">Trace Test 1</div>
<div class="av" style="left:650px;top:760.3px"></div>
<div class="t" style="left:658.49px;top:771.94px;font-size:11.29px;color:#4f6275;transform:scaleY(1.142);transform-origin:0 9px;-webkit-text-stroke:0.05px #4f6275;">SS</div>
<div class="t" style="left:692.34px;top:771.14px;font-size:12.35px;color:#56626e;transform:scaleY(1.103);transform-origin:0 10px;-webkit-text-stroke:0.15px #56626e;">Sathish Sola</div>
<div class="t" style="left:876.60px;top:770.14px;font-size:13.36px;color:#56626e;transform:scaleY(1.019);transform-origin:0 11px;-webkit-text-stroke:0.15px #56626e;">11/08/2025 15:38:01</div>
<div class="t" style="left:1052.63px;top:771.14px;font-size:12.96px;color:#56626e;transform:scaleY(1.051);transform-origin:0 10px;-webkit-text-stroke:0.15px #56626e;">15:38:02</div>
<div class="st" style="left:1227.3px;top:771.1px"></div>
<div class="abs" style="left:1240px;top:764.3px;width:30.5px;height:22px;overflow:hidden"><div class="t" style="left:2.24px;top:6.60px;font-size:12.35px;color:#56626e;transform:scale(0.900,1.080);transform-origin:0 10px;-webkit-text-stroke:0.15px #56626e;">Success</div></div>
<div class="ln" style="left:283px;top:799.1px;width:987px"></div>
<div class="t" style="left:383.15px;top:818.58px;font-size:12.35px;color:#56626e;transform:scaleY(1.103);transform-origin:0 10px;-webkit-text-stroke:0.15px #56626e;">Trace Test 1</div>
<div class="av" style="left:650px;top:807.8px"></div>
<div class="t" style="left:659.19px;top:814.38px;font-size:16.42px;color:#4f6275;transform:scaleY(0.786);transform-origin:0 14px;-webkit-text-stroke:0.05px #4f6275;">M</div>
<div class="t" style="left:691.91px;top:818.58px;font-size:12.35px;color:#56626e;transform:scaleY(1.103);transform-origin:0 10px;-webkit-text-stroke:0.15px #56626e;">Mayuri</div>
<div class="t" style="left:876.60px;top:817.58px;font-size:13.36px;color:#56626e;transform:scaleY(1.019);transform-origin:0 11px;-webkit-text-stroke:0.15px #56626e;">11/08/2025 14:08:39</div>
<div class="t" style="left:1052.63px;top:818.58px;font-size:12.94px;color:#56626e;transform:scaleY(1.052);transform-origin:0 10px;-webkit-text-stroke:0.15px #56626e;">14:08:39</div>
<div class="st" style="left:1227.3px;top:818.6px"></div>
<div class="abs" style="left:1240px;top:811.8px;width:30.5px;height:22px;overflow:hidden"><div class="t" style="left:2.24px;top:6.60px;font-size:12.35px;color:#56626e;transform:scale(0.900,1.080);transform-origin:0 10px;-webkit-text-stroke:0.15px #56626e;">Success</div></div>
<div class="ln" style="left:283px;top:846.5px;width:987px"></div>
<div class="t" style="left:382.41px;top:866.02px;font-size:12.35px;color:#56626e;transform:scaleY(1.103);transform-origin:0 10px;-webkit-text-stroke:0.15px #56626e;">Replicate Data</div>
<div class="av" style="left:650px;top:855.2px"></div>
<div class="t" style="left:656.99px;top:865.82px;font-size:12.60px;color:#4f6275;transform:scaleY(1.024);transform-origin:0 10px;-webkit-text-stroke:0.05px #4f6275;">KC</div>
<div class="t" style="left:691.91px;top:866.02px;font-size:12.35px;color:#56626e;transform:scaleY(1.103);transform-origin:0 10px;-webkit-text-stroke:0.15px #56626e;">Koti Challapalle</div>
<div class="t" style="left:876.59px;top:865.02px;font-size:13.46px;color:#56626e;transform:scaleY(1.012);transform-origin:0 11px;-webkit-text-stroke:0.15px #56626e;">11/08/2025 11:59:20</div>
<div class="t" style="left:1052.61px;top:865.02px;font-size:13.21px;color:#56626e;transform:scaleY(1.032);transform-origin:0 11px;-webkit-text-stroke:0.15px #56626e;">11:59:49</div>
<div class="st" style="left:1227.3px;top:866.0px"></div>
<div class="abs" style="left:1240px;top:859.2px;width:30.5px;height:22px;overflow:hidden"><div class="t" style="left:2.24px;top:6.60px;font-size:12.35px;color:#56626e;transform:scale(0.900,1.080);transform-origin:0 10px;-webkit-text-stroke:0.15px #56626e;">Success</div></div>
<div class="ln" style="left:283px;top:894.0px;width:987px"></div>
<div class="av" style="left:650px;top:901.9px"></div>
<div class="abs" style="left:0;top:907px;width:1622px;height:2px;background:#d3d6d9"></div>
<svg style="left:1414.5px;top:53.5px" width="14" height="12" viewBox="0 0 14 12"><circle cx="5.5" cy="5.2" r="4.6" fill="none" stroke="#5e6b78" stroke-width="1.1"/><path d="M8.8 8.6 L12 11.8" stroke="#5e6b78" stroke-width="1.2"/></svg>
<svg style="left:1443.5px;top:55px" width="13" height="10" viewBox="0 0 13 10"><path d="M1.8 5 A4.6 4.6 0 0 1 10.5 3 M11.2 5 A4.6 4.6 0 0 1 2.5 7" fill="none" stroke="#5e6b78" stroke-width="1.2"/><path d="M10.9 0.5 L10.7 3.4 L7.9 3.2 M2.1 9.5 L2.3 6.6 L5.1 6.8" fill="none" stroke="#5e6b78" stroke-width="1.2"/></svg>
<svg style="left:1467.5px;top:54.5px" width="13" height="11.5" viewBox="0 0 13 11.5"><path d="M0.8 0.8 L12.2 0.8 L7.8 6 L7.8 10.8 L5.2 9 L5.2 6 Z" fill="none" stroke="#5e6b78" stroke-width="1.1" stroke-linejoin="round"/></svg>
<div class="abs" style="left:1486px;top:53.4px;width:23.6px;height:14px;border-radius:7px;border:1px solid #c5ced7;background:#fff"></div>
<div class="abs" style="left:1497.5px;top:55.5px;width:10px;height:10px;border-radius:50%;background:#3c5a80"></div>
<div class="t" style="left:1514.56px;top:54.40px;font-size:12.19px;color:#55626f;transform:scaleY(0.999);transform-origin:0 10px;">TraceOn</div>
<div class="abs" style="left:1573px;top:59.7px;width:3px;height:3px;border-radius:50%;background:#3c4a58;box-shadow:4.3px 0 0 #3c4a58,8.6px 0 0 #3c4a58"></div>
<svg style="left:1594px;top:56.5px" width="11" height="7" viewBox="0 0 11 7"><path d="M0.8 6 L5.5 1.2 L10.2 6" fill="none" stroke="#5e6b78" stroke-width="1.2"/></svg>
<div class="abs" style="left:1270px;top:71px;width:352px;height:836px;background:#fff"></div>
<div class="abs" style="left:1266px;top:71px;width:5px;height:836px;background:linear-gradient(to right,rgba(0,0,0,0),rgba(0,0,0,0.03))"></div>
<div class="abs" style="left:1271px;top:71px;width:11px;height:836px;background:linear-gradient(to right,rgba(0,0,0,0.025),rgba(0,0,0,0))"></div>
<div class="abs" style="left:1611px;top:80px;width:9px;height:827px;background:#f5f6f7"></div>
<div class="abs" style="left:1281px;top:78.8px;width:339.3px;height:431.2px;border:2.2px solid #e31b1f"></div>
<div class="t" style="left:1285.72px;top:102.30px;font-size:14.15px;color:#1f2d3d;transform:scaleY(1.065);transform-origin:0 12px;-webkit-text-stroke:0.4px #1f2d3d;">Task Log Details</div>
<svg style="left:1578px;top:104px" width="12.5" height="12.6" viewBox="0 0 12.5 12.6"><path d="M0.8 0.7 L6 6.3 L0.8 11.9 M6.3 0.7 L11.5 6.3 L6.3 11.9" fill="none" stroke="#3d4a58" stroke-width="1.4"/></svg>
<div class="t" style="left:1285.03px;top:134.50px;font-size:12.09px;color:#5b6876;transform:scaleY(1.019);transform-origin:0 10px;">Message</div>
<div class="abs" style="left:1285.5px;top:154.4px;width:314px;height:172px;background:#f0f7fe;border:1px solid #e3eaf1;border-radius:4px"></div>
<div class="t" style="left:1291.89px;top:166.50px;font-size:12.64px;color:#a3acb6;transform:scaleY(1.123);transform-origin:0 10px;-webkit-text-stroke:0.2px #a3acb6">Message details not available</div>
<svg style="left:1584px;top:306px" width="9" height="9" viewBox="0 0 9 9"><path d="M8 2.5 L2.5 8 M8 5.5 L5.5 8" stroke="#555" stroke-width="1"/></svg>
<div class="t" style="left:1284.83px;top:342.30px;font-size:12.13px;color:#5f6f80;transform:scaleY(1.064);transform-origin:0 10px;">Log File</div>
<div class="t" style="left:1284.78px;top:364.10px;font-size:12.73px;color:#262a2e;transform:scaleY(0.979);transform-origin:0 10px;text-decoration:underline;text-decoration-color:#555">Log_2020.txt</div>
<div class="t" style="left:1285.56px;top:394.10px;font-size:11.89px;color:#5f6f80;transform:scaleY(1.036);transform-origin:0 9px;">Trace File</div>
<div class="t" style="left:1285.56px;top:415.50px;font-size:12.08px;color:#262a2e;transform:scaleY(1.116);transform-origin:0 10px;text-decoration:underline;text-decoration-color:#555">Trace_2020.xlsx</div>
<svg style="left:1456px;top:416px" width="21" height="24" viewBox="0 0 21 24"><path d="M7 14 L7 3.8 Q7 2 8.8 2 Q10.6 2 10.6 3.8 L10.6 8.3 L13.2 8.3 L15.8 8.8 Q18.6 9 18.6 11 L18.6 17 Q18.6 22.5 12.5 22.5 Q8 22.5 5.5 18.5 L2.6 14.5 Q2 13 3.3 12.7 Q4.6 12.4 6 13.5 L7 14.3 Z" fill="#fff" stroke="#4a4a4a" stroke-width="1.1" stroke-linejoin="round"/><path d="M13.2 8.5 L13.2 12 M15.8 9 L15.8 12" stroke="#4a4a4a" stroke-width="1"/></svg>
<div class="abs" style="left:1389.5px;top:865px;width:106.5px;height:26.5px;border:2.2px solid #1a95b9;border-radius:5px;background:#fff"></div>
<div class="t" style="left:1421.48px;top:873.80px;font-size:10.36px;color:#1a7d9f;transform:scaleY(1.063);transform-origin:0 8px;-webkit-text-stroke:0.4px #1a7d9f;">CANCEL</div>
</body></html>
